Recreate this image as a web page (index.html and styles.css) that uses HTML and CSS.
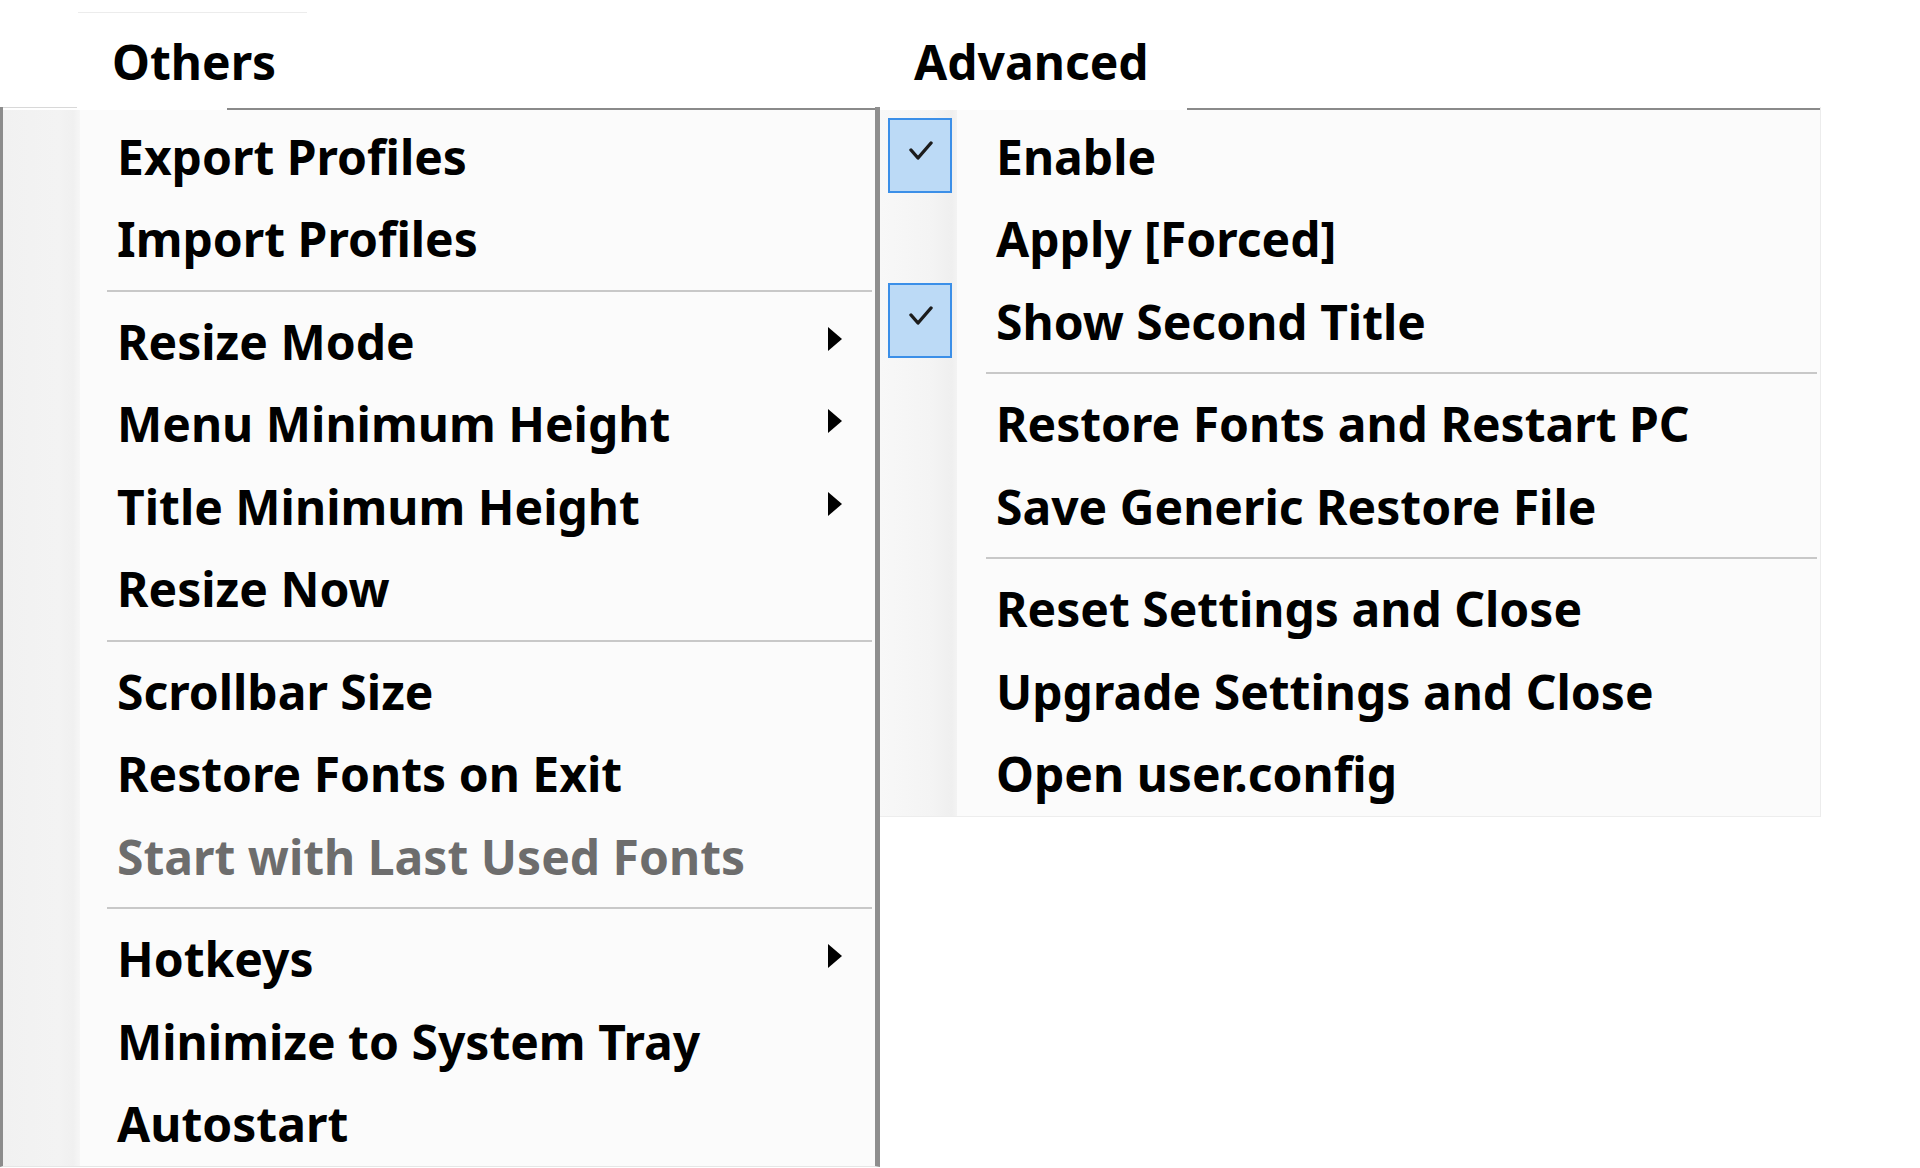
FILE: index.html
```html
<!DOCTYPE html>
<html lang="en">
<head>
<meta charset="utf-8">
<title>Menu</title>
<link rel="stylesheet" href="styles.css">
</head>
<body>
<div class="page">
  <div class="menubar">
    <div class="tab tab-others"><span class="tab-label">Others</span></div>
    <div class="tab tab-advanced"><span class="tab-label">Advanced</span></div>
  </div>
  <div class="menus">
    <div class="menu menu-left">
      <div class="menu-top">
        <div class="seg-light"></div>
        <div class="seg-gap"></div>
        <div class="seg-dark"></div>
      </div>
      <div class="menu-body">
        <div class="item"><div class="gutter"></div><div class="label">Export Profiles</div></div>
        <div class="item"><div class="gutter"></div><div class="label">Import Profiles</div></div>
        <div class="sep"></div>
        <div class="item"><div class="gutter"></div><div class="label">Resize Mode</div><svg class="arrow" viewBox="0 0 15 24"><polygon points="1,0 15,12 1,24"/></svg></div>
        <div class="item"><div class="gutter"></div><div class="label">Menu Minimum Height</div><svg class="arrow" viewBox="0 0 15 24"><polygon points="1,0 15,12 1,24"/></svg></div>
        <div class="item"><div class="gutter"></div><div class="label">Title Minimum Height</div><svg class="arrow" viewBox="0 0 15 24"><polygon points="1,0 15,12 1,24"/></svg></div>
        <div class="item"><div class="gutter"></div><div class="label">Resize Now</div></div>
        <div class="sep"></div>
        <div class="item"><div class="gutter"></div><div class="label">Scrollbar Size</div></div>
        <div class="item"><div class="gutter"></div><div class="label">Restore Fonts on Exit</div></div>
        <div class="item disabled"><div class="gutter"></div><div class="label">Start with Last Used Fonts</div></div>
        <div class="sep"></div>
        <div class="item"><div class="gutter"></div><div class="label">Hotkeys</div><svg class="arrow" viewBox="0 0 15 24"><polygon points="1,0 15,12 1,24"/></svg></div>
        <div class="item"><div class="gutter"></div><div class="label">Minimize to System Tray</div></div>
        <div class="item"><div class="gutter"></div><div class="label">Autostart</div></div>
      </div>
    </div>
    <div class="menu menu-right">
      <div class="menu-top">
        <div class="seg-gap-r"></div>
        <div class="seg-dark"></div>
      </div>
      <div class="menu-body">
        <div class="item"><div class="gutter"><div class="check"><svg viewBox="0 0 24 20"><path d="M2 9 L9 17 L22 2"/></svg></div></div><div class="label">Enable</div></div>
        <div class="item"><div class="gutter"></div><div class="label">Apply [Forced]</div></div>
        <div class="item"><div class="gutter"><div class="check"><svg viewBox="0 0 24 20"><path d="M2 9 L9 17 L22 2"/></svg></div></div><div class="label">Show Second Title</div></div>
        <div class="sep"></div>
        <div class="item"><div class="gutter"></div><div class="label">Restore Fonts and Restart PC</div></div>
        <div class="item"><div class="gutter"></div><div class="label">Save Generic Restore File</div></div>
        <div class="sep"></div>
        <div class="item"><div class="gutter"></div><div class="label">Reset Settings and Close</div></div>
        <div class="item"><div class="gutter"></div><div class="label">Upgrade Settings and Close</div></div>
        <div class="item"><div class="gutter"></div><div class="label">Open user.config</div></div>
      </div>
    </div>
  </div>
</div>
</body>
</html>
```
FILE: styles.css
```css
html, body {
  margin: 0;
  padding: 0;
  background: #ffffff;
}
body {
  font-family: "Noto Sans", "Open Sans", sans-serif;
  font-weight: 700;
  font-size: 48px;
  color: #000000;
  width: 1920px;
  height: 1168px;
  overflow: hidden;
}
.page {
  display: flex;
  flex-direction: column;
}

/* menu bar */
.menubar {
  display: flex;
  height: 107px;
}
.tab {
  box-sizing: border-box;
  line-height: 82.5px;
  white-space: nowrap;
}
.tab-others {
  margin-left: 78px;
  margin-top: 12px;
  width: 229px;
  height: 95px;
  border-top: 1px solid #ececec;
  padding-left: 34px;
  padding-top: 8px;
}
.tab-advanced {
  margin-left: 573px;
  width: 307px;
  padding-left: 34px;
  padding-top: 21px;
}

/* menus */
.menus {
  display: flex;
  align-items: flex-start;
}
.menu {
  display: flex;
  flex-direction: column;
  box-sizing: border-box;
}
.menu-top {
  display: flex;
  height: 3px;
  flex: none;
}
.seg-dark {
  flex: 1;
  height: 2px;
  margin-top: 1px;
  background: #8a8a8a;
}

.menu-left {
  width: 880px;
  height: 1060px;
  border-left: 3px solid #8c8c8c;
  border-right: 5px solid #8e8e8e;
  border-bottom: 1px solid #e6e6e6;
  background: #ffffff;
  overflow: hidden;
}
.seg-light {
  width: 74px;
  height: 1px;
  background: #d8d8d8;
}
.seg-gap {
  width: 150px;
}
.menu-left .menu-body {
  padding-top: 5.5px;
  background: linear-gradient(to right, #f1f1f1 0, #f3f3f3 55px, #f0f0f0 70px, #f6f6f6 77px, #fbfbfb 77px);
  flex: 1;
}
.menu-left .gutter {
  width: 77px;
}
.menu-left .label {
  padding-left: 37px;
}
.menu-left .sep {
  margin-left: 104px;
  margin-right: 3px;
}

.menu-right {
  width: 941px;
  height: 710px;
  border-right: 1px solid #ececec;
  border-bottom: 1px solid #ededed;
  background: #ffffff;
}
.seg-gap-r {
  width: 307px;
}
.menu-right .menu-body {
  padding-top: 5.5px;
  background: linear-gradient(to right, #f8f8f8 0, #f4f4f4 50px, #efefef 72px, #f3f3f3 77px, #fbfbfb 77px);
  flex: 1;
}
.menu-right .gutter {
  width: 77px;
}
.menu-right .label {
  padding-left: 39px;
}
.menu-right .sep {
  margin-left: 106px;
  margin-right: 3px;
}

.item {
  display: flex;
  align-items: flex-start;
  height: 82.5px;
  line-height: 82.5px;
  white-space: nowrap;
  flex: none;
}
.gutter {
  flex: none;
  height: 100%;
}
.label {
  flex: 1;
}
.disabled .label {
  color: #6d6d6d;
}
.arrow {
  flex: none;
  width: 15px;
  height: 24px;
  margin-top: 26px;
  margin-right: 33px;
  fill: #000000;
}
.sep {
  flex: none;
  height: 20px;
  box-sizing: border-box;
  padding-top: 9px;
}
.sep::before {
  content: "";
  display: block;
  height: 2px;
  background: #c8c8c8;
}

.check {
  box-sizing: border-box;
  margin-top: 2px;
  margin-left: 8px;
  width: 64px;
  height: 75px;
  border: 2px solid #3b8fe8;
  background: #bcdaf6;
  display: flex;
  align-items: center;
  justify-content: center;
}
.check svg {
  width: 24px;
  height: 20px;
  margin-bottom: 8px;
  margin-left: 2px;
  fill: none;
  stroke: #1c1c1c;
  stroke-width: 3.4;
  stroke-linecap: round;
  stroke-linejoin: round;
}
```
